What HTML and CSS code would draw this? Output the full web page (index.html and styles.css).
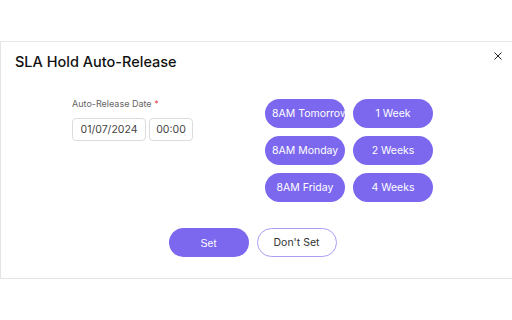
FILE: index.html
```html
<!DOCTYPE html>
<html lang="en">
<head>
    <meta charset="UTF-8">
    <meta name="viewport" content="width=device-width, initial-scale=1.0">
    <title>SLA Hold Auto-Release</title>
    <link rel="stylesheet" href="styles.css">
</head>
<body>
    <div class="modal">
        <div class="modal-header">
            <h2 class="modal-title">SLA Hold Auto-Release</h2>
            <span class="close">
                <svg width="8" height="8" viewBox="0 0 8 8"><path d="M0.5 0.5 L7.5 7.5 M7.5 0.5 L0.5 7.5" stroke="#222" stroke-width="1" fill="none"/></svg>
            </span>
        </div>

        <div class="modal-body">
            <!-- data e hora -->
            <div class="date-field">
                <label class="field-label">Auto-Release Date <span class="req">*</span></label>
                <div class="inputs">
                    <input class="date-input" type="text" value="01/07/2024">
                    <input class="time-input" type="text" value="00:00">
                </div>
            </div>

            <!-- atalhos -->
            <div class="presets">
                <button class="preset-btn">8AM Tomorrow</button>
                <button class="preset-btn">1 Week</button>
                <button class="preset-btn">8AM Monday</button>
                <button class="preset-btn">2 Weeks</button>
                <button class="preset-btn">8AM Friday</button>
                <button class="preset-btn">4 Weeks</button>
            </div>
        </div>

        <div class="modal-footer">
            <button class="btn btn-primary">Set</button>
            <button class="btn btn-outline">Don't Set</button>
        </div>
    </div>
</body>
</html>
```

FILE: styles.css
```css
body {
    margin: 0;
    background: #fff;
    font-family: Inter, "Noto Sans", sans-serif;
    color: #222;
}

.modal {
    position: relative;
    margin-top: 41px;
    height: 236px;
    border-top: 1px solid #e8e8e8;
    border-bottom: 1px solid #e4e4e4;
    border-left: 1px solid #e4e4e4;
}

.modal-header {
    padding: 10px 14px 0;
}

.modal-title {
    margin: 0;
    font-size: 14.5px;
    line-height: 20px;
    font-weight: 500;
    color: #111;
}

.close {
    position: absolute;
    top: 10px;
    right: 10px;
    line-height: 0;
    cursor: pointer;
}

.modal-body {
    display: flex;
    gap: 72px;
    padding: 26px 0 0 71px;
}

.field-label {
    display: block;
    font-size: 9px;
    line-height: 12px;
    color: #666;
    margin-bottom: 8px;
}

.req {
    color: #e5484d;
}

.inputs {
    display: flex;
    gap: 3px;
}

.date-input,
.time-input {
    box-sizing: border-box;
    height: 23px;
    border: 1px solid #dcdcdc;
    border-radius: 4px;
    font-family: Inter, sans-serif;
    font-size: 10.5px;
    color: #444;
    text-align: center;
    padding: 0;
    outline: none;
}

.date-input {
    width: 74px;
}

.time-input {
    width: 44px;
}

.presets {
    display: grid;
    grid-template-columns: 80px 80px;
    gap: 8px;
    margin-top: 1px;
}

.preset-btn {
    height: 29px;
    border: none;
    border-radius: 15px;
    background: #7b68ee;
    color: #fff;
    font-family: Inter, sans-serif;
    font-size: 10.5px;
    padding: 0 7px;
    white-space: nowrap;
    overflow: hidden;
    cursor: pointer;
}

.modal-footer {
    display: flex;
    justify-content: center;
    gap: 8px;
    margin-top: 26px;
    padding-right: 8px;
}

.btn {
    width: 80px;
    height: 29px;
    border-radius: 15px;
    font-size: 10.5px;
    cursor: pointer;
}

.btn-primary {
    background: #7b68ee;
    border: none;
    color: #fff;
    font-family: "Liberation Sans", Arial, sans-serif;
}

.btn-outline {
    background: #fff;
    border: 1px solid #a99ef5;
    color: #333;
    font-family: Inter, sans-serif;
}
```
